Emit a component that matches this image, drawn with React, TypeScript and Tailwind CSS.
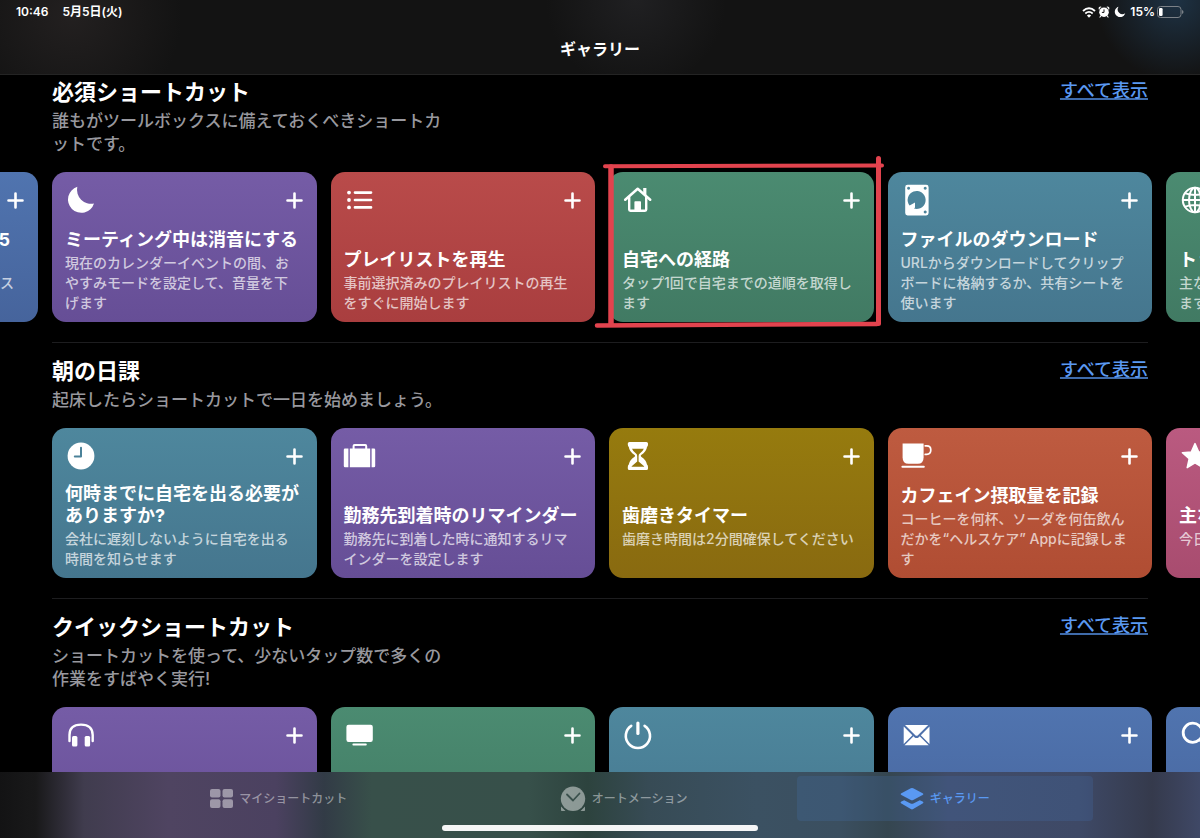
import type { ReactNode } from 'react'

type Card = {
	icon?: ReactNode
	title?: string
	text?: string
	color: string
	marked?: boolean
	trailing?: boolean
}

type Section = {
	title: string
	text: string
	scrolled?: boolean
	cards: Card[]
}

const colors = {
	blue: 'from-[#5074af] to-[#46649c]',
	purple: 'from-[#755ca6] to-[#664e96]',
	red: 'from-[#b94b4a] to-[#a93e3f]',
	green: 'from-[#4b8b71] to-[#417a63]',
	teal: 'from-[#4e879d] to-[#45768e]',
	yellow: 'from-[#967b0e] to-[#896a10]',
	orange: 'from-[#be5b40] to-[#b04d33]',
	pink: 'from-[#ba5a80] to-[#a84c6f]'
}

function Glyph({ children }: { children: ReactNode }) {
	return (
		<svg
			viewBox="0 0 30 30"
			className="size-[30px] shrink-0 overflow-visible"
			fill="white"
			strokeLinecap="round"
			strokeLinejoin="round"
			aria-hidden="true"
		>
			{children}
		</svg>
	)
}

const moon = (
	<Glyph>
		<path d="M11.3 1.8A13.3 13.3 0 1 0 28 18.4A14 14 0 0 1 11.3 1.8Z" />
	</Glyph>
)

const list = (
	<Glyph>
		<circle cx="4" cy="7.6" r="1.9" />
		<circle cx="4" cy="15" r="1.9" />
		<circle cx="4" cy="22.4" r="1.9" />
		<path d="M10 7.6h16M10 15h16M10 22.4h16" stroke="white" strokeWidth="2.7" />
	</Glyph>
)

const house = (
	<Glyph>
		<path d="M20.2 8V3h3.2v8z" />
		<path d="M2.2 14.8L14.7 3.8L27.2 14.8" fill="none" stroke="white" strokeWidth="2.5" />
		<path d="M6.2 12.5v12q0 1.2 1.2 1.2h14.6q1.2 0 1.2-1.2v-12" fill="none" stroke="white" strokeWidth="2.4" />
		<path d="M11.4 26v-9q0-.8.8-.8h5q.8 0 .8.8v9z" />
	</Glyph>
)

const disk = (
	<Glyph>
		<path
			fillRule="evenodd"
			d="M5.6-.2h18.6q2.4 0 2.4 2.4v25.8q0 2.4-2.4 2.4H5.6q-2.4 0-2.4-2.4V2.2Q3.2-.2 5.6-.2ZM7.6 20.6L13 17.5V22.6L12 23.6A9 9 0 1 0 7.6 20.6ZM6.6 1.8a1.5 1.5 0 1 0 .01 0ZM23.2 1.8a1.5 1.5 0 1 0 .01 0ZM23.2 25.4a1.5 1.5 0 1 0 .01 0Z"
		/>
	</Glyph>
)

const globe = (
	<Glyph>
		<g fill="none" stroke="white" strokeWidth="2">
			<circle cx="15" cy="15" r="12.2" />
			<ellipse cx="15" cy="15" rx="6" ry="12.2" />
			<path d="M15 3v24M3 15h24M5.2 8.4q9.8 3 19.6 0M5.2 21.6q9.8-3 19.6 0" />
		</g>
	</Glyph>
)

const clock = (
	<Glyph>
		<circle cx="15" cy="15" r="13.4" />
		<path d="M15 6.8v8.6H8.8" fill="none" stroke="#4b8299" strokeWidth="2" />
	</Glyph>
)

const suitcase = (
	<Glyph>
		<path d="M0 7.5h3.4v18.7H0q-1.2 0-1.2-1.2V8.7Q-1.2 7.5 0 7.5ZM4.8 7.5h20.4v18.7H4.8zM26.6 7.5H29q1.2 0 1.2 1.2v16.3q0 1.2-1.2 1.2h-2.4z" />
		<path d="M8.6 8V4.9q0-.9.9-.9h10.8q.9 0 .9.9V8" fill="none" stroke="white" strokeWidth="2" />
	</Glyph>
)

const hourglass = (
	<Glyph>
		<path
			fillRule="evenodd"
			d="M6.4 1h17q1.6 0 1.6 1.6v1q0 1.5-1 2.5q-.5 4.5-5.8 7.9q-1 .8 0 1.7q5.3 3.4 5.8 7.9q1 .9 1 2.3v1.5q0 1.6-1.6 1.6H6.4q-1.6 0-1.6-1.6v-1.5q0-1.4 1-2.3q.5-4.5 5.8-7.9q1-.9 0-1.7Q6.3 10.6 5.8 6.1q-1-1-1-2.5v-1Q4.8 1 6.4 1ZM9 7.8h11.8q-1.2 3-4 4.7q-1.2 1-1.2 2.4v5.6l5.5 4.7q.2.6-.3.6H9q-.5 0-.3-.6l5.5-4.7v-5.6q0-1.4-1.2-2.4Q10.2 10.8 9 7.8Z"
		/>
	</Glyph>
)

const cup = (
	<Glyph>
		<path d="M.6 2.5h21v14q0 6.3-6 6.3H6.6q-6 0-6-6.3z" />
		<path d="M23.2 4.8h1.6q4 0 4 4.2t-4 4.4h-1.6" fill="none" stroke="white" strokeWidth="1.7" />
		<path d="M.4 25.8h21.4" stroke="white" strokeWidth="2" />
	</Glyph>
)

const star = (
	<Glyph>
		<path
			d="M15 2.6l3.6 8.3 9 .8-6.8 6 2 8.9-7.8-4.7-7.8 4.7 2-8.9-6.8-6 9-.8z"
			stroke="white"
			strokeWidth="1.5"
		/>
	</Glyph>
)

const headphones = (
	<Glyph>
		<path d="M3.5 21V15Q3.5 4.600 15 4.600T26.7 15v6" fill="none" stroke="white" strokeWidth="2.4" />
		<rect x="6" y="16" width="5.4" height="10.4" rx="1.5" />
		<rect x="18.7" y="16" width="5.4" height="10.4" rx="1.5" />
	</Glyph>
)

const tv = (
	<Glyph>
		<rect x="1.4" y="4.8" width="26.4" height="17.2" rx="2.2" />
		<rect x="7.4" y="23.6" width="14.4" height="2" rx="1" />
	</Glyph>
)

const power = (
	<Glyph>
		<path d="M8.2 5.8A12.1 12.1 0 1 0 21.6 5.8" fill="none" stroke="white" strokeWidth="2.6" />
		<path d="M14.9 3v10.5" stroke="white" strokeWidth="3.2" />
	</Glyph>
)

const mail = (
	<Glyph>
		<path d="M3 5h23.2l-10.3 10.3q-1.3 1.1-2.6 0zM1.7 6.5l8.7 8.7-8.7 8.7zM27.5 6.5v17.4l-8.7-8.7zM11.5 16.3l.9.9q2.2 1.8 4.4 0l.9-.9 9 9H2.5z" />
	</Glyph>
)

const search = (
	<Glyph>
		<circle cx="12.8" cy="12.8" r="9.6" fill="none" stroke="white" strokeWidth="2.8" />
		<path d="M20 20l7 7" stroke="white" strokeWidth="3" />
	</Glyph>
)

const sections: Section[] = [
	{
		title: '必須ショートカット',
		text: '誰もがツールボックスに備えておくべきショートカットです。',
		scrolled: true,
		cards: [
			{ title: '5', text: '\nス\n\u00a0', color: colors.blue, trailing: true },
			{
				icon: moon,
				title: 'ミーティング中は消音にする',
				text: '現在のカレンダーイベントの間、おやすみモードを設定して、音量を下げます',
				color: colors.purple
			},
			{
				icon: list,
				title: 'プレイリストを再生',
				text: '事前選択済みのプレイリストの再生をすぐに開始します',
				color: colors.red
			},
			{
				icon: house,
				title: '自宅への経路',
				text: 'タップ1回で自宅までの道順を取得します',
				color: colors.green,
				marked: true
			},
			{
				icon: disk,
				title: 'ファイルのダウンロード',
				text: 'URLからダウンロードしてクリップボードに格納するか、共有シートを使います',
				color: colors.teal
			},
			{ icon: globe, title: 'トッ', text: '主な\nます', color: colors.green }
		]
	},
	{
		title: '朝の日課',
		text: '起床したらショートカットで一日を始めましょう。',
		cards: [
			{
				icon: clock,
				title: '何時までに自宅を出る必要がありますか?',
				text: '会社に遅刻しないように自宅を出る時間を知らせます',
				color: colors.teal
			},
			{
				icon: suitcase,
				title: '勤務先到着時のリマインダー',
				text: '勤務先に到着した時に通知するリマインダーを設定します',
				color: colors.purple
			},
			{
				icon: hourglass,
				title: '歯磨きタイマー',
				text: '歯磨き時間は2分間確保してください',
				color: colors.yellow
			},
			{
				icon: cup,
				title: 'カフェイン摂取量を記録',
				text: 'コーヒーを何杯、ソーダを何缶飲んだかを“ヘルスケア” Appに記録します',
				color: colors.orange
			},
			{ icon: star, title: '主な', text: '今日', color: colors.pink }
		]
	},
	{
		title: 'クイックショートカット',
		text: 'ショートカットを使って、少ないタップ数で多くの作業をすばやく実行!',
		cards: [
			{ icon: headphones, color: colors.purple },
			{ icon: tv, color: colors.green },
			{ icon: power, color: colors.teal },
			{ icon: mail, color: colors.blue },
			{ icon: search, color: colors.blue }
		]
	}
]

// Hand-drawn red frame around a card
function Marker() {
	return (
		<svg
			viewBox="0 0 294 176"
			className="absolute -top-4 -left-4 z-10 h-[176px] w-[294px] pointer-events-none"
			fill="none"
			stroke="#e2434e"
			strokeLinecap="round"
			aria-hidden="true"
		>
			<path d="M12 10.2L289 9.5" strokeWidth="4" />
			<path d="M18 11V168" strokeWidth="5.5" />
			<path d="M4 169.5L284 168" strokeWidth="4.5" />
			<path d="M285.5 2.5V167.5" strokeWidth="5" />
		</svg>
	)
}

function ShortcutCard({ card }: { card: Card }) {
	return (
		<li className="relative w-[calc((100vw-142px)/4)] shrink-0">
			<article
				className={`flex min-h-[150px] flex-col justify-between rounded-[14px] bg-linear-to-b pt-[13px] pb-[9px] ${card.color}`}
			>
				<div className="flex h-[30px] items-center justify-between px-[14px]">
					{card.icon ?? <span />}
					<button type="button" aria-label="+">
						<svg viewBox="0 0 17 17" className="size-[17px]" stroke="white" strokeWidth="2.6" strokeLinecap="round">
							<path d="M8.5 1.5v14M1.5 8.5h14" />
						</svg>
					</button>
				</div>
				{card.title && (
					<div className={`pr-4 pl-[13px] ${card.trailing ? 'text-right' : ''}`}>
						<h3 className={`text-[18px] leading-[22px] font-bold ${card.trailing ? 'pr-3' : ''}`}>{card.title}</h3>
						<p
							className={`mt-[2px] min-h-10 text-[14px] leading-5 font-medium whitespace-pre-line text-white/70 ${card.trailing ? 'pr-2' : ''}`}
						>
							{card.text}
						</p>
					</div>
				)}
			</article>
			{card.marked && <Marker />}
		</li>
	)
}

function GallerySection({ section }: { section: Section }) {
	return (
		<section className="pb-5">
			<div className="mx-[52px] flex items-start justify-between border-t border-[#1d1d1f] pt-[14px]">
				<div>
					<h2 className="text-[22px] leading-7 font-bold">{section.title}</h2>
					<p className="mt-1 max-w-[400px] text-[17px] leading-[23px] font-medium text-[#98989e]">{section.text}</p>
				</div>
				<a
					href="#all"
					className="text-[18px] leading-[26px] font-medium text-[#5a99f2] underline decoration-[#5a99f2]/70 decoration-2 underline-offset-1"
				>
					すべて表示
				</a>
			</div>
			<ul
				className={`mt-4 flex gap-[14px] pl-[52px] ${section.scrolled ? '-ml-[calc((100vw-142px)/4+14px)]' : ''}`}
			>
				{section.cards.map((card, i) => (
					<ShortcutCard key={i} card={card} />
				))}
			</ul>
		</section>
	)
}

function StatusBar() {
	return (
		<div className="flex h-6 items-center justify-between px-4 text-[12px] font-semibold">
			<div className="flex gap-[14px]">
				<span>10:46</span>
				<span>5月5日(火)</span>
			</div>
			<div className="flex items-center gap-[2px]">
				<svg viewBox="0 0 14 11" className="h-[11px] w-[14px]" fill="none" stroke="white" aria-hidden="true">
					<path d="M1 4Q7-1.3 13 4" strokeWidth="1.9" />
					<path d="M3.3 6.5Q7 3.3 10.7 6.5" strokeWidth="1.8" />
					<path d="M7 10.7L4.9 8.5Q7 6.7 9.1 8.5Z" fill="white" stroke="none" />
				</svg>
				<svg viewBox="0 0 12 12" className="size-3" fill="white" aria-hidden="true">
					<circle cx="6" cy="6.2" r="4.8" />
					<path
						d="M1.3 3Q.8 1.2 2.8 1M10.7 3Q11.2 1.2 9.2 1M2.8 10l-.8 1M9.2 10l.8 1"
						fill="none"
						stroke="white"
						strokeWidth="1.2"
						strokeLinecap="round"
					/>
					<path d="M6 3.4v3H3.9" fill="none" stroke="#141414" strokeWidth="1" />
				</svg>
				<svg viewBox="0 0 30 30" className="ml-[2px] size-3" fill="white" aria-hidden="true">
					<path d="M11.3 1.8A13.3 13.3 0 1 0 28 18.4A12 12 0 0 1 11.3 1.8Z" />
				</svg>
				<span className="ml-[2px]">15%</span>
				<svg viewBox="0 0 27 12" className="h-3 w-[27px]" aria-hidden="true">
					<rect x=".5" y=".5" width="23.5" height="11" rx="3" fill="none" stroke="#7c8288" />
					<rect x="2" y="2" width="3.6" height="8" rx="1.2" fill="white" />
					<path d="M25 4q1.5.5 1.5 2T25 8z" fill="#7c8288" />
				</svg>
			</div>
		</div>
	)
}

function TabBar() {
	return (
		<nav className="fixed inset-x-0 bottom-0 z-20 bg-[linear-gradient(to_right,#131314_0%,#19191a_3%,#403c4e_7%,#4f4461_14%,#4b4160_23%,#323b46_27%,#38504a_31%,#37504a_44%,#2d433e_49%,#374b55_54%,#3b5162_63%,#3b4f60_70%,#354650_74%,#404c69_79%,#3e4966_90%,#353a4c_96%,#3f4866_100%)] pb-[7px]">
			<div className="flex gap-[6px] px-[107px] pt-1 text-[12px] font-medium text-white/45">
				<button type="button" className="flex h-[45px] flex-auto items-center justify-center gap-[6px]">
					<svg viewBox="0 0 23 19" className="h-[19px] w-[23px]" fill="currentColor" aria-hidden="true">
						<rect width="10.5" height="8.6" rx="2" />
						<rect x="12.5" width="10.5" height="8.6" rx="2" />
						<rect y="10.3" width="10.5" height="8.6" rx="2" />
						<rect x="12.5" y="10.3" width="10.5" height="8.6" rx="2" />
					</svg>
					マイショートカット
				</button>
				<button type="button" className="flex h-[45px] flex-auto items-center justify-center gap-[6px]">
					<svg viewBox="0 0 26 26" className="size-[26px]" fill="currentColor" aria-hidden="true">
						<circle cx="13" cy="12.8" r="12.2" />
						<path d="M1 20.5L5.5 25H1.8Q1 25 1 24.2ZM25 20.5L20.5 25h3.7q.8 0 .8-.8Z" />
						<path
							d="M7 8.5l6 6 6.5-7"
							fill="none"
							stroke="#3a504c"
							strokeWidth="1.8"
							strokeLinecap="round"
							strokeLinejoin="round"
						/>
					</svg>
					オートメーション
				</button>
				<button
					type="button"
					aria-current="page"
					className="flex h-[45px] flex-auto items-center justify-center gap-[6px] rounded bg-[#4878c0]/20 text-[#5a99f2]"
				>
					<svg viewBox="0 0 24 24" className="size-6" fill="currentColor" aria-hidden="true">
						<path d="M10.8 1.3q1.2-.6 2.4 0l9.4 4.9q1.6.9 0 1.8l-9.4 4.9q-1.2.6-2.4 0L1.4 8q-1.6-.9 0-1.8z" />
						<path d="M4.2 13.2l6.4 3.2q1.4.6 2.8 0l6.4-3.2 2.8 1.4q1.6.9 0 1.9l-9.4 5.6q-1.2.6-2.4 0l-9.4-5.6q-1.6-1 0-1.9z" />
					</svg>
					ギャラリー
				</button>
			</div>
			<div className="mx-auto mt-1 h-[6px] w-[316px] rounded-full bg-white/95" />
		</nav>
	)
}

export default function App() {
	return (
		<div className="flex h-screen flex-col overflow-hidden bg-black font-[Inter,'Noto_Sans_CJK_JP',sans-serif] text-white">
			<header className="z-10 border-b border-[#242424] bg-[#131313] bg-[radial-gradient(circle_at_98%_0,#1e3244_0,transparent_80px),radial-gradient(circle_at_6%_20%,#232020_0,transparent_110px),radial-gradient(circle_at_53%_0,#202022_0,transparent_90px)]">
				<StatusBar />
				<h1 className="pt-[13px] pb-[13px] text-center text-[16px] leading-6 font-bold">ギャラリー</h1>
			</header>
			<main className="-mt-3 min-h-0 flex-1 overflow-x-hidden overflow-y-auto [scrollbar-width:none]">
				{sections.map(section => (
					<GallerySection key={section.title} section={section} />
				))}
			</main>
			<TabBar />
		</div>
	)
}
